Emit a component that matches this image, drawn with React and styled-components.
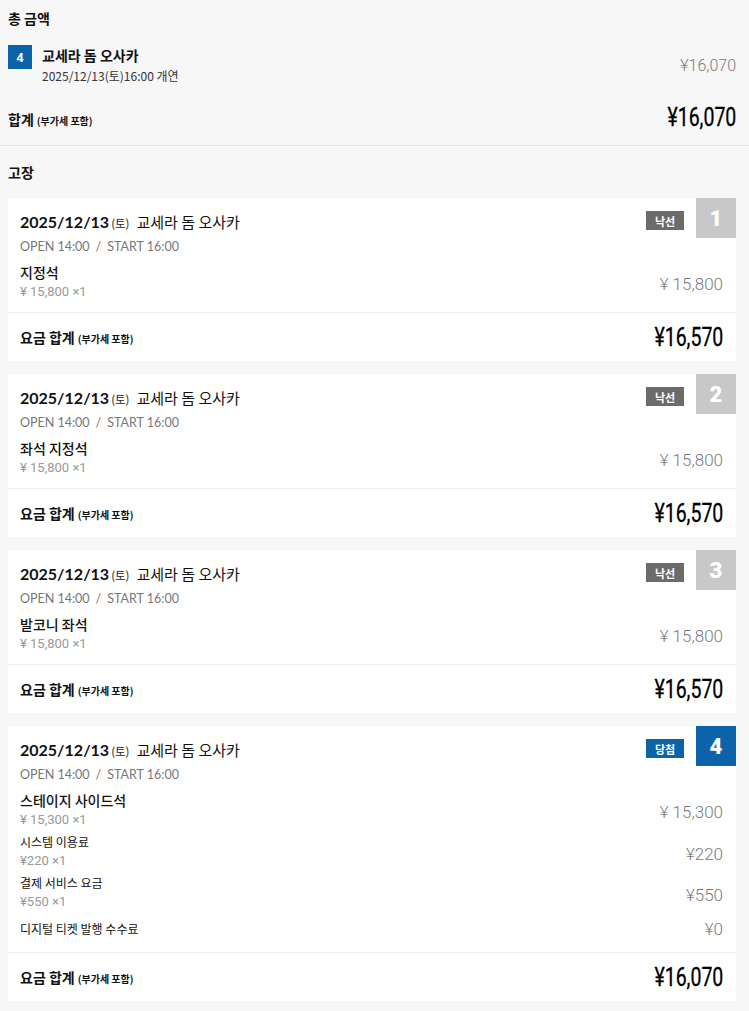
import React from 'react';
import styled, { createGlobalStyle } from 'styled-components';

const GlobalStyle = createGlobalStyle`
  body {
    margin: 0;
    background: #f7f7f7;
    font-family: "Noto Sans CJK KR", "Noto Sans", sans-serif;
    color: #111;
  }
`;

const KR = '"Noto Sans CJK KR", "Noto Sans", sans-serif';
const NUM = 'Roboto, "Noto Sans CJK KR", sans-serif';
const LATIN = 'Lato, "Noto Sans CJK KR", sans-serif';

const Page = styled.div`
  width: 749px;
  padding-bottom: 10px;
`;

const Summary = styled.section`
  padding: 8px 13px 10px 8px;
  border-bottom: 1px solid #e6e6e6;
`;

const SectionTitle = styled.h2`
  margin: 0;
  font-size: 14px;
  line-height: 20px;
  font-weight: 700;
  font-family: ${KR};
`;

const SummaryItem = styled.div`
  display: flex;
  align-items: center;
  justify-content: space-between;
  margin-top: 17px;
`;

const SummaryLeft = styled.div`
  display: flex;
  align-items: flex-start;
  gap: 10px;
`;

const NumBox = styled.div`
  width: 24px;
  height: 24px;
  background: #0c63aa;
  color: #fff;
  font-family: ${NUM};
  font-weight: 700;
  font-size: 13px;
  display: flex;
  align-items: center;
  justify-content: center;
`;

const SummaryTitle = styled.div`
  font-size: 14px;
  line-height: 20px;
  font-weight: 700;
`;

const SummaryDate = styled.div`
  font-size: 12px;
  line-height: 18px;
  margin-top: 2px;
  color: #333;
`;

const GrayPrice = styled.div`
  font-family: ${NUM};
  font-weight: 300;
  font-size: ${({ $size }) => $size || 17}px;
  color: #7a7a7a;
  padding-top: ${({ $shift }) => $shift || 0}px;
  white-space: pre;
`;

const TotalRow = styled.div`
  display: flex;
  align-items: center;
  justify-content: space-between;
  height: ${({ $h }) => $h}px;
  margin-top: ${({ $mt }) => $mt || 0}px;
  padding: ${({ $pad }) => $pad || 0};
`;

const TotalLabel = styled.div`
  font-size: 14px;
  font-weight: 700;
  padding-top: ${({ $shift }) => $shift || 0}px;
  small {
    font-size: 10px;
    font-weight: 700;
    margin-left: 3px;
  }
`;

const BigPrice = styled.div`
  font-family: ${NUM};
  font-weight: 400;
  font-size: 25px;
  color: #000;
  transform: scaleX(0.78);
  transform-origin: right center;
  -webkit-text-stroke: 0.3px #000;
`;

const Breakdown = styled.section`
  padding: 16px 13px 0 8px;
`;

const CardList = styled.div`
  display: flex;
  flex-direction: column;
  gap: 13px;
  margin-top: 16px;
`;

const Card = styled.div`
  position: relative;
  background: #fff;
`;

const CardBody = styled.div`
  padding: 12px 13px 11px 12px;
  border-bottom: 1px solid #ebebeb;
`;

const Corner = styled.div`
  position: absolute;
  top: 0;
  right: 0;
  display: flex;
  align-items: flex-start;
  gap: 12px;
`;

const StatusTag = styled.div`
  margin-top: 13px;
  width: 38px;
  height: 19px;
  background: ${({ $won }) => ($won ? '#0c63aa' : '#6b6b6b')};
  color: #fff;
  font-size: 11px;
  font-weight: 700;
  display: flex;
  align-items: center;
  justify-content: center;
`;

const RankBox = styled.div`
  width: 40px;
  height: 40px;
  background: ${({ $won }) => ($won ? '#0c63aa' : '#c8c8c8')};
  color: #fff;
  font-family: ${NUM};
  font-weight: 900;
  font-size: 22px;
  display: flex;
  align-items: center;
  justify-content: center;
`;

const DateRow = styled.div`
  display: flex;
  align-items: baseline;
  height: 24px;
  line-height: 24px;
`;

const DateText = styled.span`
  font-family: ${LATIN};
  font-weight: 700;
  font-size: 16px;
  color: #111;
`;

const Weekday = styled.span`
  font-size: 11.5px;
  margin-left: 2px;
  color: #222;
`;

const Venue = styled.span`
  font-size: 15px;
  margin-left: 7px;
  color: #111;
`;

const TimeLine = styled.div`
  margin-top: 4px;
  font-family: ${LATIN};
  font-size: 12.5px;
  line-height: 18px;
  color: #777;
  span {
    margin: 0 6px;
  }
`;

const ItemList = styled.div`
  margin-top: 6px;
  display: flex;
  flex-direction: column;
  gap: 4px;
`;

const ItemRow = styled.div`
  display: flex;
  justify-content: space-between;
  align-items: center;
  padding: ${({ $single }) => ($single ? '4px 0 2px' : '0')};
`;

const ItemName = styled.div`
  font-size: ${({ $main }) => ($main ? 14 : 12)}px;
  font-weight: ${({ $main }) => ($main ? 500 : 400)};
  line-height: ${({ $main }) => ($main ? 20 : 18)}px;
  color: #111;
`;

const ItemSub = styled.div`
  font-family: ${NUM};
  font-size: 13px;
  line-height: 19px;
  color: #999;
`;

const tickets = [
  { rank: 1, won: false, seat: '지정석', price: '15,800', total: '¥16,570' },
  { rank: 2, won: false, seat: '좌석 지정석', price: '15,800', total: '¥16,570' },
  { rank: 3, won: false, seat: '발코니 좌석', price: '15,800', total: '¥16,570' },
  {
    rank: 4,
    won: true,
    seat: '스테이지 사이드석',
    price: '15,300',
    total: '¥16,070',
    fees: [
      { name: '시스템 이용료', sub: '¥220 ×1', price: '¥220' },
      { name: '결제 서비스 요금', sub: '¥550 ×1', price: '¥550' },
      { name: '디지털 티켓 발행 수수료', price: '¥0' },
    ],
  },
];

const TicketCard = ({ t }) => (
  <Card>
    <Corner>
      <StatusTag $won={t.won}>{t.won ? '당첨' : '낙선'}</StatusTag>
      <RankBox $won={t.won}>{t.rank}</RankBox>
    </Corner>
    <CardBody>
      <DateRow>
        <DateText>2025/12/13</DateText>
        <Weekday>(토)</Weekday>
        <Venue>교세라 돔 오사카</Venue>
      </DateRow>
      <TimeLine>
        OPEN 14:00<span>/</span>START 16:00
      </TimeLine>
      <ItemList>
        <ItemRow>
          <div>
            <ItemName $main>{t.seat}</ItemName>
            <ItemSub>¥ {t.price} ×1</ItemSub>
          </div>
          <GrayPrice $shift={4}>¥ {t.price}</GrayPrice>
        </ItemRow>
        {(t.fees || []).map((f) => (
          <ItemRow key={f.name} $single={!f.sub}>
            <div>
              <ItemName>{f.name}</ItemName>
              {f.sub && <ItemSub>{f.sub}</ItemSub>}
            </div>
            <GrayPrice $shift={f.sub ? 4 : 0}>{f.price}</GrayPrice>
          </ItemRow>
        ))}
      </ItemList>
    </CardBody>
    <TotalRow $h={48} $pad="0 13px 0 12px">
      <TotalLabel>
        요금 합계<small>(부가세 포함)</small>
      </TotalLabel>
      <BigPrice>{t.total}</BigPrice>
    </TotalRow>
  </Card>
);

export default function App() {
  return (
    <Page>
      <GlobalStyle />
      <Summary>
        <SectionTitle>총 금액</SectionTitle>
        <SummaryItem>
          <SummaryLeft>
            <NumBox>4</NumBox>
            <div>
              <SummaryTitle>교세라 돔 오사카</SummaryTitle>
              <SummaryDate>2025/12/13(토)16:00 개연</SummaryDate>
            </div>
          </SummaryLeft>
          <GrayPrice $size={16}>¥16,070</GrayPrice>
        </SummaryItem>
        <TotalRow $h={36} $mt={14}>
          <TotalLabel $shift={4}>
            합계<small>(부가세 포함)</small>
          </TotalLabel>
          <BigPrice>¥16,070</BigPrice>
        </TotalRow>
      </Summary>
      <Breakdown>
        <SectionTitle>고장</SectionTitle>
        <CardList>
          {tickets.map((t) => (
            <TicketCard key={t.rank} t={t} />
          ))}
        </CardList>
      </Breakdown>
    </Page>
  );
}
